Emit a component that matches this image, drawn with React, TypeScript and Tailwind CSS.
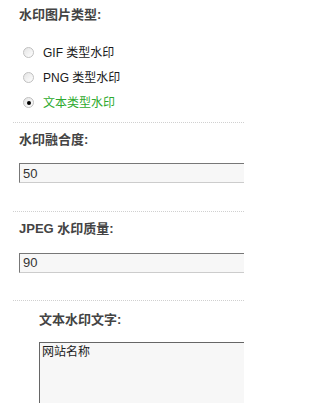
export default function App() {
  const font = { fontFamily: '"Liberation Sans", "Noto Sans CJK SC", sans-serif' };

  const radios = [
    { label: 'GIF 类型水印', checked: false },
    { label: 'PNG 类型水印', checked: false },
    { label: '文本类型水印', checked: true },
  ];

  return (
    <div className="w-[244px] h-[403px] overflow-hidden bg-white text-[#333]" style={font}>
      {/* 水印图片类型 */}
      <div className="pl-[19px] pt-[8px]">
        <div className="h-[14px] leading-[14px] text-[13px] font-bold text-[#444]">水印图片类型:</div>
        <div className="mt-[18px] pl-[4px]">
          {radios.map((r) => (
            <label key={r.label} className="flex items-center h-[25px]">
              <span className="w-[11px] h-[11px] rounded-full border border-[#c0c0c0] bg-gradient-to-br from-[#e4e4e4] to-white flex items-center justify-center">
                {r.checked && <span className="w-[4px] h-[4px] rounded-full bg-black" />}
              </span>
              <span className={`ml-[9px] text-[12px] ${r.checked ? 'text-[#2eaa2e]' : 'text-[#1a1a1a]'}`}>
                {r.label}
              </span>
            </label>
          ))}
        </div>
      </div>

      <div className="mt-[7px] ml-[13px] border-t border-dotted border-[#d0d0d0]" />

      {/* 水印融合度 */}
      <div className="pl-[19px]">
        <div className="mt-[10px] h-[14px] leading-[14px] text-[13px] font-bold text-[#444]">水印融合度:</div>
        <input
          readOnly
          value="50"
          className="mt-[16px] w-[260px] h-[20px] px-[3px] text-[13px] text-[#333] bg-[#f7f7f7] border border-t-[#777] border-l-[#777] border-b-[#ccc] border-r-[#ccc] outline-none"
        />
      </div>

      <div className="mt-[26px] ml-[13px] border-t border-dotted border-[#d0d0d0]" />

      {/* JPEG 水印质量 */}
      <div className="pl-[19px]">
        <div className="mt-[10px] h-[14px] leading-[14px] text-[13px] font-bold text-[#444]">JPEG 水印质量:</div>
        <input
          readOnly
          value="90"
          className="mt-[17px] w-[260px] h-[20px] px-[3px] text-[13px] text-[#333] bg-[#f7f7f7] border border-t-[#777] border-l-[#777] border-b-[#ccc] border-r-[#ccc] outline-none"
        />
      </div>

      <div className="mt-[26px] ml-[13px] border-t border-dotted border-[#d0d0d0]" />

      {/* 文本水印文字 */}
      <div className="pl-[39px]">
        <div className="mt-[12px] h-[14px] leading-[14px] text-[13px] font-bold text-[#444]">文本水印文字:</div>
        <textarea
          readOnly
          value="网站名称"
          className="mt-[15px] block w-[240px] h-[90px] px-[2px] py-[1px] text-[12px] leading-[16px] text-[#222] bg-[#f7f7f7] border border-t-[#666] border-l-[#666] border-b-[#ccc] border-r-[#ccc] outline-none resize-none"
        />
      </div>
    </div>
  );
}
